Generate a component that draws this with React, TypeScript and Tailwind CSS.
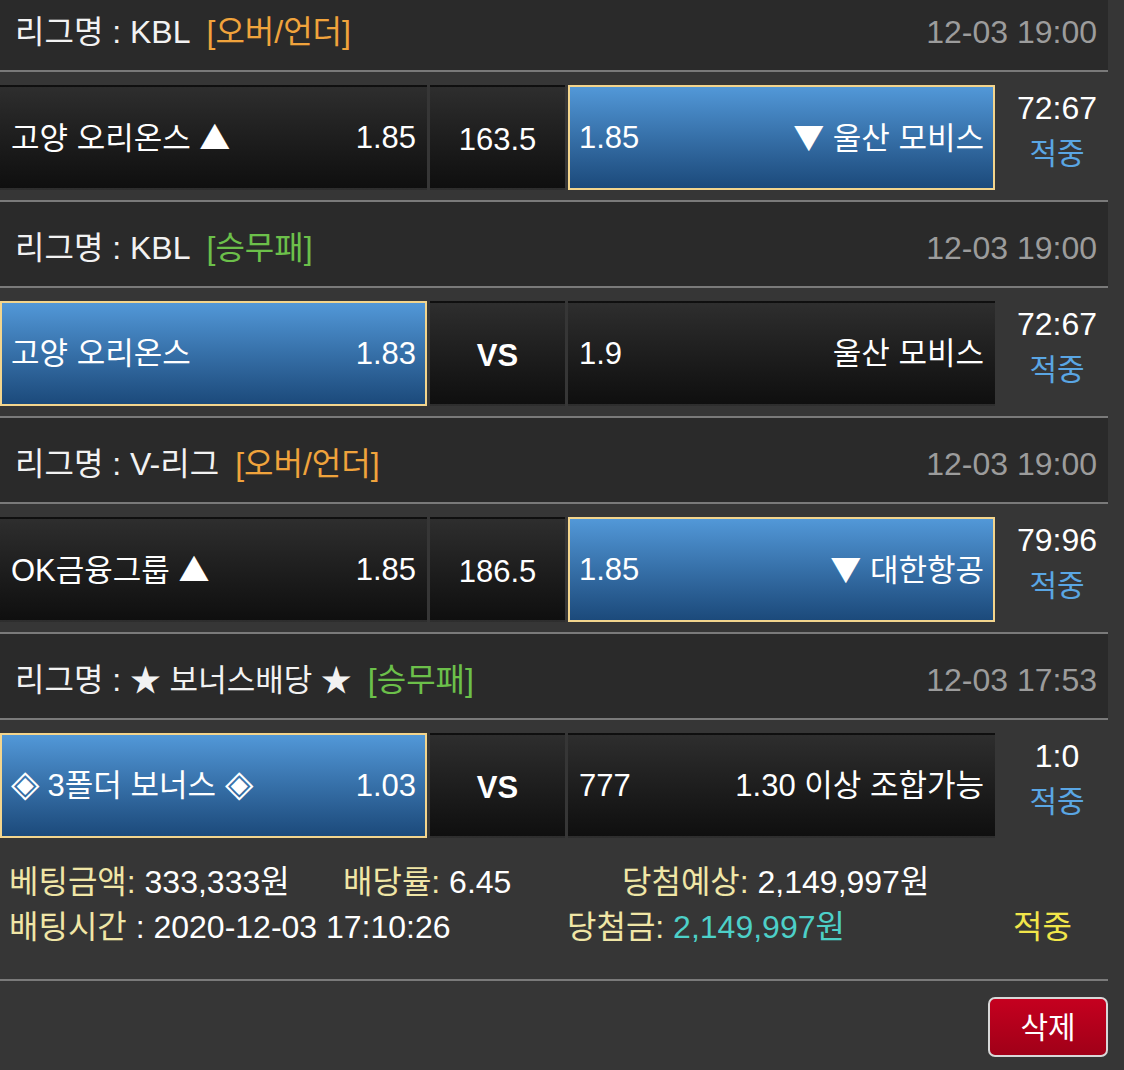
import React from 'react';

type Pick = {
  name: React.ReactNode;
  odds: string;
  picked?: boolean;
};

type Game = {
  league: React.ReactNode;
  kind: string;
  kindColor: string;
  time: string;
  home: Pick;
  center: string;
  away: Pick;
  score: string;
};

// 기호는 CJK 폰트로 (▲ ▼ ◈ 크기 맞추기)
function Sym({ children, big }: { children: React.ReactNode; big?: boolean }) {
  return (
    <span className={`font-['Noto_Sans_CJK_KR',sans-serif] ${big ? 'text-[37px] leading-[0]' : ''}`}>
      {children}
    </span>
  );
}

const games: Game[] = [
  {
    league: 'KBL',
    kind: '[오버/언더]',
    kindColor: 'text-[#f0a33c]',
    time: '12-03 19:00',
    home: { name: <>고양 오리온스 <Sym>▲</Sym></>, odds: '1.85' },
    center: '163.5',
    away: { name: <><Sym>▼</Sym> 울산 모비스</>, odds: '1.85', picked: true },
    score: '72:67',
  },
  {
    league: 'KBL',
    kind: '[승무패]',
    kindColor: 'text-[#6cc04a]',
    time: '12-03 19:00',
    home: { name: '고양 오리온스', odds: '1.83', picked: true },
    center: 'VS',
    away: { name: '울산 모비스', odds: '1.9' },
    score: '72:67',
  },
  {
    league: 'V-리그',
    kind: '[오버/언더]',
    kindColor: 'text-[#f0a33c]',
    time: '12-03 19:00',
    home: { name: <>OK금융그룹 <Sym>▲</Sym></>, odds: '1.85' },
    center: '186.5',
    away: { name: <><Sym>▼</Sym> 대한항공</>, odds: '1.85', picked: true },
    score: '79:96',
  },
  {
    league: <span className="text-[31px]">★ 보너스배당 ★</span>,
    kind: '[승무패]',
    kindColor: 'text-[#6cc04a]',
    time: '12-03 17:53',
    home: { name: <><Sym big>◈</Sym> 3폴더 보너스 <Sym big>◈</Sym></>, odds: '1.03', picked: true },
    center: 'VS',
    away: { name: '1.30 이상 조합가능', odds: '777' },
    score: '1:0',
  },
];

const cellBase = 'flex h-[105px] items-center border-2 px-[9px]';
const cellDark = 'border-transparent bg-gradient-to-b from-[#2e2e2e] to-[#0f0f0f]';
const cellBlue = 'border-[#f3d58d] bg-gradient-to-b from-[#5298d8] to-[#1c4a7b]';

function Line() {
  return <div className="h-[2px] bg-[#7a7a7a]" />;
}

function GameBlock({ game, first }: { game: Game; first: boolean }) {
  return (
    <div>
      {!first && <Line />}
      {/* 리그 헤더 */}
      <div className="flex h-[84px] items-center justify-between bg-[#2a2a2a] pl-[15px] pr-[11px] pt-[8px] text-[32px] leading-[40px]">
        <div className="text-[#f2f2f2]">
          리그명 : {game.league}
          <span className={`ml-[16px] ${game.kindColor}`}>{game.kind}</span>
        </div>
        <div className="text-[#9c9c9c]">{game.time}</div>
      </div>
      <Line />
      {/* 경기 */}
      <div className="flex h-[128px] pt-[13px] text-[31px] leading-[40px] text-white">
        <div className={`${cellBase} w-[427px] justify-between ${game.home.picked ? cellBlue : cellDark}`}>
          <span>{game.home.name}</span>
          <span>{game.home.odds}</span>
        </div>
        <div className={`${cellBase} ml-[3px] w-[135px] justify-center pt-[4px] ${cellDark} ${game.center === 'VS' ? 'font-bold' : ''}`}>
          {game.center}
        </div>
        <div className={`${cellBase} ml-[3px] w-[427px] justify-between ${game.away.picked ? cellBlue : cellDark}`}>
          <span>{game.away.odds}</span>
          <span>{game.away.name}</span>
        </div>
        <div className="flex w-[113px] flex-col items-center pl-[11px] leading-[46px]">
          <span className="text-[32px]">{game.score}</span>
          <span className="text-[30px] text-[#5aa6e4]">적중</span>
        </div>
      </div>
    </div>
  );
}

export default function App() {
  return (
    <div className="min-h-screen overflow-hidden bg-[#363636] text-[30px] font-['Liberation_Sans','Noto_Sans_CJK_KR',sans-serif]">
      <div className="-mt-[14px] w-[1108px]">
        {games.map((game, i) => (
          <GameBlock key={i} game={game} first={i === 0} />
        ))}

        {/* 베팅 정보 */}
        <div className="h-[131px] pl-[9px] pt-[12px] text-[32px] leading-[45px] text-white">
          <div className="flex">
            <div className="w-[334px]">
              <span className="text-[#f0e6a6]">베팅금액:</span> 333,333원
            </div>
            <div className="w-[279px]">
              <span className="text-[#f0e6a6]">배당률:</span> 6.45
            </div>
            <div>
              <span className="text-[#f0e6a6]">당첨예상:</span> 2,149,997원
            </div>
          </div>
          <div className="flex">
            <div className="w-[558px]">
              <span className="text-[#f0e6a6]">배팅시간</span> : 2020-12-03 17:10:26
            </div>
            <div className="w-[446px]">
              <span className="text-[#f0e6a6]">당첨금:</span>{' '}
              <span className="text-[#4dd0c8]">2,149,997원</span>
            </div>
            <div className="text-[#f2e64a]">적중</div>
          </div>
        </div>
        <Line />

        <div className="flex justify-end pt-[16px]">
          <button className="flex h-[60px] w-[120px] items-center justify-center rounded-[7px] border-2 border-[#d8d8d8] bg-gradient-to-b from-[#c5001f] to-[#a00018] text-[30px] text-white">
            삭제
          </button>
        </div>
      </div>
    </div>
  );
}
